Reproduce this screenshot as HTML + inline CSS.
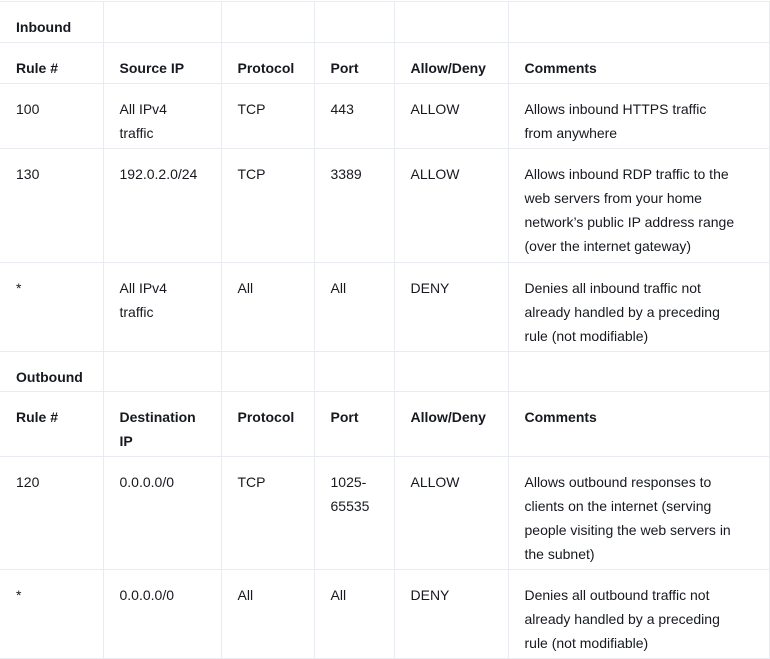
<!DOCTYPE html>
<html><head><style>
body{margin:0;background:#fff;font-family:"Liberation Sans",sans-serif;font-size:14px;color:#16191f;}
table{border-collapse:collapse;table-layout:fixed;position:absolute;left:0;top:1px;width:769px;}
td{border:1px solid #e9ebf3;vertical-align:top;padding:13px 8px 2px 16px;line-height:24px;height:24px;white-space:nowrap;}
tr td:first-child{border-left:none;}
b{font-weight:bold;}
</style></head><body>
<table>
<colgroup><col style="width:103px"><col style="width:118px"><col style="width:93px"><col style="width:80px"><col style="width:114px"><col style="width:261px"></colgroup>
<tr style="height:41px"><td><b>Inbound</b></td><td></td><td></td><td></td><td></td><td></td></tr>
<tr style="height:41px"><td><b>Rule #</b></td><td><b>Source IP</b></td><td><b>Protocol</b></td><td><b>Port</b></td><td><b>Allow/Deny</b></td><td><b>Comments</b></td></tr>
<tr style="height:65px"><td>100</td><td>All IPv4<br>traffic</td><td>TCP</td><td>443</td><td>ALLOW</td><td>Allows inbound HTTPS traffic<br>from anywhere</td></tr>
<tr style="height:114px"><td>130</td><td>192.0.2.0/24</td><td>TCP</td><td>3389</td><td>ALLOW</td><td>Allows inbound RDP traffic to the<br>web servers from your home<br>network’s public IP address range<br>(over the internet gateway)</td></tr>
<tr style="height:89px"><td>*</td><td>All IPv4<br>traffic</td><td>All</td><td>All</td><td>DENY</td><td>Denies all inbound traffic not<br>already handled by a preceding<br>rule (not modifiable)</td></tr>
<tr style="height:40px"><td><b>Outbound</b></td><td></td><td></td><td></td><td></td><td></td></tr>
<tr style="height:65px"><td><b>Rule #</b></td><td><b>Destination<br>IP</b></td><td><b>Protocol</b></td><td><b>Port</b></td><td><b>Allow/Deny</b></td><td><b>Comments</b></td></tr>
<tr style="height:113px"><td>120</td><td>0.0.0.0/0</td><td>TCP</td><td>1025-<br>65535</td><td>ALLOW</td><td>Allows outbound responses to<br>clients on the internet (serving<br>people visiting the web servers in<br>the subnet)</td></tr>
<tr style="height:89px"><td>*</td><td>0.0.0.0/0</td><td>All</td><td>All</td><td>DENY</td><td>Denies all outbound traffic not<br>already handled by a preceding<br>rule (not modifiable)</td></tr>
</table>
</body></html>
